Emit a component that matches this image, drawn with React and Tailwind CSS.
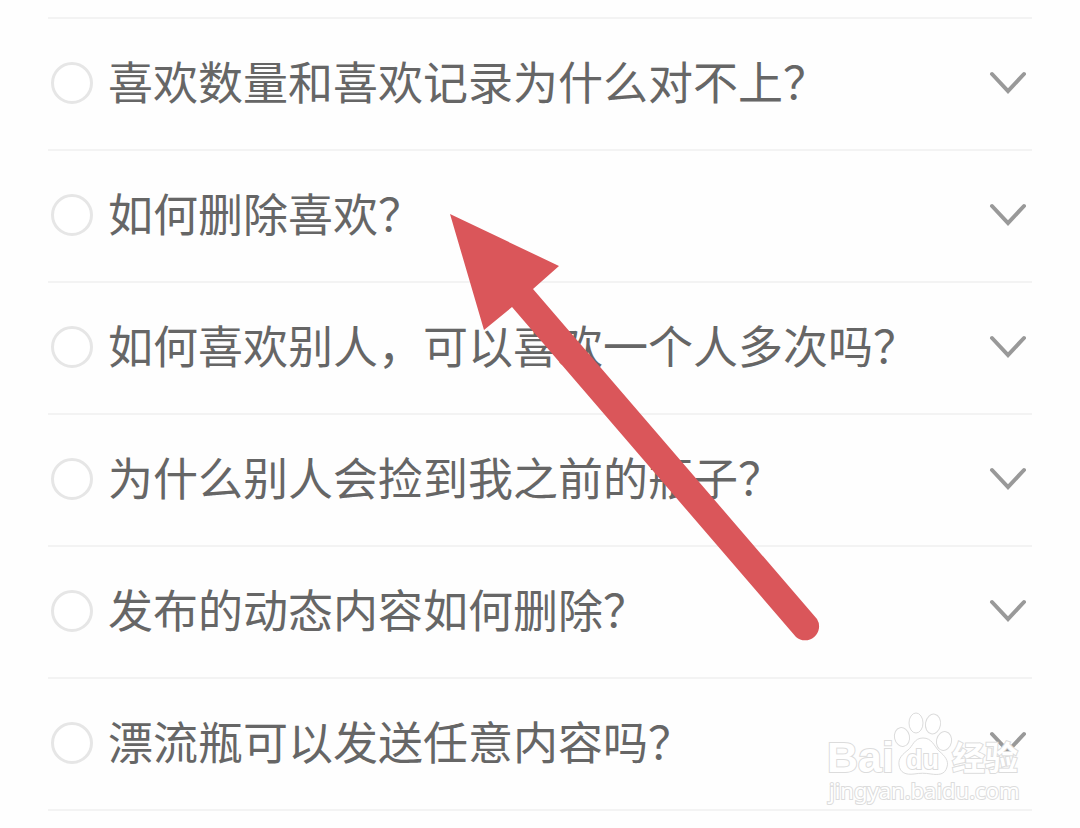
import { useState } from 'react'

const QUESTIONS = [
  '喜欢数量和喜欢记录为什么对不上？',
  '如何删除喜欢？',
  '如何喜欢别人，可以喜欢一个人多次吗？',
  '为什么别人会捡到我之前的瓶子？',
  '发布的动态内容如何删除？',
  '漂流瓶可以发送任意内容吗？',
]

function QuestionRow({ text, index, checked, onSelect }) {
  return (
    <li className="flex items-center justify-between h-[132px] pb-0.5 border-b-2 border-[#f3f3f3]">
      <label htmlFor={`q-${index}`} className="flex items-center gap-[15px] pl-[3px] whitespace-nowrap">
        <input
          id={`q-${index}`}
          type="radio"
          name="question"
          checked={checked}
          onChange={() => onSelect(index)}
          className="appearance-none size-[42px] shrink-0 rounded-full border-3 border-[#e6e6e6] bg-white checked:border-[#666]"
        />
        <span className="pb-1 text-[45px] leading-[60px] text-[#666]">{text}</span>
      </label>
      <button type="button" aria-label={`展开：${text}`} className="mr-1 shrink-0">
        <svg width="40" height="24" viewBox="0 0 40 24" fill="none" stroke="#999" strokeWidth="4" strokeLinecap="round">
          <path d="M4 3 20 20 36 3" />
        </svg>
      </button>
    </li>
  )
}

function Arrow() {
  return (
    <svg className="absolute left-[450px] top-[214px] pointer-events-none" width="372" height="430" viewBox="0 0 372 430">
      <path d="M0 0 109 52 83 75 367 405A14 14 0 0 1 346 423L62 93 34 116Z" fill="#da565a" />
    </svg>
  )
}

function Watermark() {
  return (
    <svg
      className="absolute right-12 bottom-1 pointer-events-none"
      width="208"
      height="98"
      viewBox="0 0 208 98"
      fill="#fff"
      stroke="#dcdcdc"
      role="img"
      aria-label="Baidu 经验"
    >
      <g strokeWidth="1">
        <ellipse cx="78" cy="28" rx="7.5" ry="9.5" transform="rotate(-12 78 28)" />
        <ellipse cx="92" cy="14" rx="7" ry="10" />
        <ellipse cx="109" cy="15" rx="7.5" ry="10" transform="rotate(10 109 15)" />
        <ellipse cx="120" cy="32" rx="7.5" ry="9.5" transform="rotate(12 120 32)" />
        <path d="M99 29C108 29 110 37 115 42C121 47 125 52 123 58C121 66 114 66 107 65C101 64 96 64 90 65C82 66 76 64 75 56C74 49 79 45 84 41C89 37 90 29 99 29Z" />
      </g>
      <g strokeWidth="2" paintOrder="stroke">
        <text x="3" y="63" fontSize="43" fontWeight="700" fontFamily="Liberation Sans, sans-serif">Bai</text>
        <text x="82" y="60" fontSize="27" fontWeight="700" fontFamily="Liberation Sans, sans-serif">du</text>
        <text x="128" y="61" fontSize="33" fontWeight="700" fontFamily="Noto Sans CJK SC, sans-serif">经验</text>
        <text x="5" y="90" fontSize="22" fontFamily="Noto Sans, sans-serif">jingyan.baidu.com</text>
      </g>
    </svg>
  )
}

export default function App() {
  const [selected, setSelected] = useState(null)
  return (
    <main className="relative min-h-screen bg-[#fefefe] px-12 pt-[17px] font-['Noto_Sans_CJK_SC',sans-serif]">
      <div className="relative -mx-12 px-12">
        <ul className="border-t-2 border-[#f3f3f3]">
          {QUESTIONS.map((text, i) => (
            <QuestionRow key={text} text={text} index={i} checked={selected === i} onSelect={setSelected} />
          ))}
        </ul>
        <Watermark />
      </div>
      <Arrow />
    </main>
  )
}
